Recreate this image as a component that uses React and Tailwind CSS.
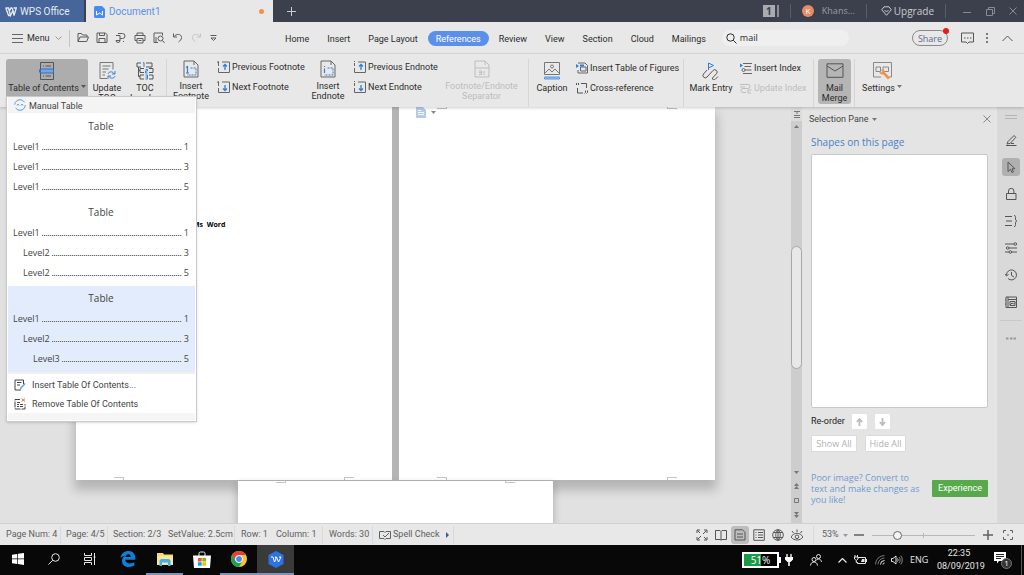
import { useState } from 'react';

const tabs = ['Home', 'Insert', 'Page Layout', 'References', 'Review', 'View', 'Section', 'Cloud', 'Mailings'];

const tocStyles = [
  [
    { label: 'Level1', page: 1, indent: 'pl-0' },
    { label: 'Level1', page: 3, indent: 'pl-0' },
    { label: 'Level1', page: 5, indent: 'pl-0' },
  ],
  [
    { label: 'Level1', page: 1, indent: 'pl-0' },
    { label: 'Level2', page: 3, indent: 'pl-[10px]' },
    { label: 'Level2', page: 5, indent: 'pl-[10px]' },
  ],
  [
    { label: 'Level1', page: 1, indent: 'pl-0' },
    { label: 'Level2', page: 3, indent: 'pl-[10px]' },
    { label: 'Level3', page: 5, indent: 'pl-[20px]' },
  ],
];

const UI_TEXT = "font-['Roboto','Noto_Sans',sans-serif] text-[9px]";
const WIDE_TEXT = "font-['Open_Sans','Noto_Sans',sans-serif] text-[9px]";

function Icon({ w = 12, h = w, children, className = '' }) {
  return (
    <svg
      width={w}
      height={h}
      viewBox={`0 0 ${w} ${h}`}
      fill="none"
      stroke="currentColor"
      strokeWidth="1"
      aria-hidden="true"
      className={`shrink-0 ${className}`}
    >
      {children}
    </svg>
  );
}

function Caret({ className = '' }) {
  return (
    <Icon w={5} h={3} className={className}>
      <path d="M0 0h5L2.500 3z" fill="currentColor" stroke="none" />
    </Icon>
  );
}

function WpsMark({ w = 12, h = 10 }) {
  return (
    <svg width={w} height={h} viewBox="0 0 12 10" fill="none" stroke="currentColor" strokeWidth="1.300" aria-hidden="true" className="shrink-0">
      <path d="M.5 1h3l2 7.500L8 3.500 6.800 1h-1L4.500 4M.8 1l2.800 7.500h2M8 3.500l1 5L11.300 1H8.500" />
    </svg>
  );
}

function TitleBar() {
  return (
    <header className="flex h-[22px] shrink-0 items-stretch bg-[#3c404c] text-[#c9cbd0]">
      <button type="button" className={`${UI_TEXT} flex w-[84px] items-center gap-[3px] bg-[#46659b] pl-[5px] pt-px text-[#e6ebf3]`}>
        <WpsMark />
        <span className="text-[10px]">WPS Office</span>
      </button>
      <div className={`${UI_TEXT} ml-[2px] flex w-[187px] items-center bg-[#e8e8e8] pl-2 pr-[9px] pt-px text-[#5b93e8]`}>
        <Icon w={11} h={12}>
          <path d="M1.500 0H8l3 3v7.500a1.500 1.500 0 0 1-1.500 1.500h-8A1.500 1.500 0 0 1 0 10.500v-9A1.500 1.500 0 0 1 1.500 0z" fill="#4b8af0" stroke="none" />
          <path d="M2.500 5v4L5.500 7l3 2V5" stroke="#fff" />
        </Icon>
        <span className="ml-1 flex-1 text-[10px]">Document1</span>
        <span className="size-[5px] rounded-full bg-[#f0924c]" />
      </div>
      <button type="button" aria-label="New tab" className="flex w-9 items-center justify-center">
        <Icon w={9}><path d="M4.500 0v9M0 4.500h9" /></Icon>
      </button>
      <div className="ml-auto flex items-center text-[10px]">
        <button type="button" aria-label="Windows" className="flex items-center gap-[2px]">
          <span className="flex h-3 w-[12px] items-center justify-center bg-[#a9abb1] font-bold text-[#3c404c]">1</span>
          <span className="h-3 w-[2px] bg-[#8b8e96]" />
        </button>
        <span className="ml-[11px] h-[14px] w-px bg-[#5a5e69]" />
        <button type="button" className="ml-[11px] flex items-center gap-2 text-[9px] font-medium text-[#9a9da5]">
          <span className="flex size-3 items-center justify-center rounded-full bg-[#e88a66] text-[8px] text-white">K</span>
          Khans...
        </button>
        <span className="ml-[11px] h-[14px] w-px bg-[#5a5e69]" />
        <button type="button" className="ml-[14px] flex items-center gap-[2px]">
          <Icon w={11} h={10}><path d="M3 .8h5l2.300 3-4.800 5.500L.7 3.800zM3.500 4l2 2 2-2" /></Icon>
          Upgrade
        </button>
        <span className="ml-[11px] h-[14px] w-px bg-[#5a5e69]" />
        <button type="button" aria-label="Minimize" className="ml-[17px] text-[#888b94]"><Icon w={8}><path d="M0 5.500h8" /></Icon></button>
        <button type="button" aria-label="Restore" className="ml-[15px] text-[#888b94]"><Icon w={9}><path d="M.5 2.500h6v6h-6zM2.500 2.500v-2h6v6h-2" /></Icon></button>
        <button type="button" aria-label="Close" className="ml-[14px] mr-[7px] text-[#888b94]"><Icon w={8}><path d="M.5.5l7 7M7.500.5l-7 7" /></Icon></button>
      </div>
    </header>
  );
}

const quickTools = [
  { name: 'Open', icon: <path d="M1 9.500v-8h3.500l1 1.500H10v2M1 9.500l2-4.500h8.500l-1.800 4.500z" /> },
  { name: 'Save', icon: <path d="M1 1h8.500L11 2.500V10.500H1zM3.500 1v2.500h5V1M3 10.500V6.500h6v4" /> },
  { name: 'Export to PDF', icon: <path d="M3 1.500h4.500a2.500 2.500 0 0 1 0 5H5M5 3.500v5a2 2 0 0 1-4 0h4M1 3.500h4M8 9.500h1" /> },
  { name: 'Print', icon: <path d="M3 3.500V1h6v2.500M3 8.500H1v-5h10v5H9M3 6.500h6v4.500H3zM4.500 8.500h3" /> },
  { name: 'Print Preview', icon: <path d="M5 10.500H1V1h8.500v2.500M7.500 4a2.500 2.500 0 1 1 0 5 2.500 2.500 0 0 1 0-5zM9.500 8.500l2 2.500M3 10.500V5" /> },
  { name: 'Undo', icon: <path d="M1.500 1.500v3.500H5M1.800 4.800C4 1.500 9.500 1.500 9.500 5.500c0 2-1.500 3.500-3 4.500" /> },
];

function MenuRow({ active, onSelect }) {
  return (
    <div className={`${UI_TEXT} flex h-8 shrink-0 items-center border-b border-[#dadada] bg-[#e8e8e8] pt-px text-[#2c2c2c]`}>
      <button type="button" className="ml-3 flex w-[50px] items-center gap-1">
        <Icon w={11} h={9} className="text-[#666]"><path d="M0 .5h11M0 4.500h11M0 8.500h11" /></Icon>
        <span className="pt-[2px]">Menu</span>
        <Icon w={7} h={4} className="ml-auto text-[#999]"><path d="M.5.5l3 3 3-3" /></Icon>
      </button>
      <span className="ml-[7px] h-[17px] w-px bg-[#c4c4c4]" />
      <div className="ml-[7px] flex w-[141px] items-center gap-[7px] text-[#5c5c5c]">
        {quickTools.map((tool) => (
          <button key={tool.name} type="button" aria-label={tool.name}><Icon>{tool.icon}</Icon></button>
        ))}
        <button type="button" aria-label="Redo" disabled className="text-[#c6c6c6]">
          <Icon><path d="M9.500 1.500v3.500H6M9.200 4.800C7 1.500 1.500 1.500 1.500 5.500c0 2 1.500 3.500 3 4.500" /></Icon>
        </button>
        <button type="button" aria-label="Customize toolbar"><Icon w={7} h={6}><path d="M.5.5h6M1 3l2.500 2.500L6 3z" /></Icon></button>
      </div>
      <nav className="ml-[59px] flex gap-[2px]">
        {tabs.map((tab) => (
          <button
            key={tab}
            type="button"
            onClick={() => onSelect(tab)}
            className={`h-[15px] rounded-full px-2 leading-[17px] whitespace-nowrap ${tab === active ? 'bg-[#5b8fe8] text-white' : ''}`}
          >
            {tab}
          </button>
        ))}
      </nav>
      <label className="ml-2 flex h-4 w-[127px] items-center gap-[3px] rounded-full bg-[#efefef] pl-1">
        <Icon w={11}><circle cx="4.500" cy="4.500" r="3.700" /><path d="M7.200 7.200l3.300 3.300" /></Icon>
        <input aria-label="Search" defaultValue="mail" className={`${WIDE_TEXT} w-full min-w-0 bg-transparent outline-none`} />
      </label>
      <div className="ml-auto flex items-center pr-[11px] text-[#555]">
        <button type="button" className={`${WIDE_TEXT} relative h-4 w-9 rounded-full border border-[#8a8a8a] leading-[13px] text-[#60688c]`}>
          Share
          <span className="absolute -right-[2px] -top-[3px] size-[6px] rounded-full bg-[#e21b1b]" />
        </button>
        <button type="button" aria-label="Comments" className="ml-[13px]">
          <Icon w={13}><path d="M.5 1h12v9H8L6.500 11.500 5 10H.5zM3 6h1.500M6 6h1.500M9 6h1.500" /></Icon>
        </button>
        <button type="button" aria-label="More" className="ml-[12px]">
          <Icon w={2} h={10}><path d="M0 1h2M0 5h2M0 9h2" strokeWidth="1.500" /></Icon>
        </button>
        <button type="button" aria-label="Collapse ribbon" className="ml-[14px]">
          <Icon w={11} h={7}><path d="M.5 6l5-5 5 5" /></Icon>
        </button>
      </div>
    </div>
  );
}

const RIBBON_BIG = 'flex shrink-0 flex-col items-center text-center leading-[10px] whitespace-nowrap';

function Divider() {
  return <span className="h-12 w-px shrink-0 bg-[#d6d6d6]" />;
}

function SmallTool({ icon, children, disabled }) {
  return (
    <button type="button" disabled={disabled} className={`flex h-4 items-center gap-[2px] whitespace-nowrap ${disabled ? 'text-[#bdbdbd]' : ''}`}>
      {icon}
      <span className="pt-[2px]">{children}</span>
    </button>
  );
}

function NoteArrow({ up, mark }) {
  return (
    <Icon w={13} h={12} className="text-[#666]">
      <path d={mark === '1' ? 'M0 1.500L1.500.5V5' : 'M1.500 0v1M1.500 2v3'} />
      <path d="M1.500 7v4.500h11V1H5" />
      <path d={up ? 'M8 9V4M6 5.500L8 3.500l2 2' : 'M8 4v5M6 7.500l2 2 2-2'} stroke="#2f7fd6" strokeWidth="1.300" />
    </Icon>
  );
}

function NoteIcon({ mark }) {
  return (
    <Icon w={16} h={18} className="text-[#666]">
      <path d="M1 1h10l4 4v12H1zM11 1v4" />
      <path d={mark === '1' ? 'M3 7.500l1.500-1V13M3 13h3' : 'M4.500 6v1M4.500 8.500V13'} stroke="#2f7fd6" strokeWidth="1.200" />
      <path d="M7.500 8H13v7H4" stroke="#2f7fd6" strokeDasharray="2 1" />
    </Icon>
  );
}

function TocMenu({ selected, onSelect }) {
  return (
    <div role="menu" className="absolute left-0 top-[37px] z-20 w-[191px] border border-[#c9c9c9] bg-white px-px text-left text-[#444] shadow-sm">
      <div className="mb-px flex h-4 items-center gap-[3px] bg-[#f4f4f4] pl-[6px] leading-none">
        <Icon w={12}>
          <circle cx="6" cy="6" r="5.300" stroke="#5b9be6" strokeDasharray="13 3.600" />
          <path d="M3 6.500L4 5l1 1.500M7 6.500L8 5l1 1.500" stroke="#5b9be6" />
        </Icon>
        <span className="pt-[2px]">Manual Table</span>
      </div>
      {tocStyles.map((rows, index) => (
        <button
          key={index}
          type="button"
          role="menuitem"
          onClick={() => onSelect(index)}
          className={`${WIDE_TEXT} flex w-full flex-col py-[3px] pl-[5px] pr-[6px] ${index === selected ? 'bg-[#e2ecfd]' : ''}`}
        >
          <span className="h-5 self-center pt-[3px] text-[10px] leading-3">Table</span>
          {rows.map((row, rowIndex) => (
            <span key={rowIndex} className={`flex h-5 w-full items-center ${row.indent}`}>
              <span>{row.label}</span>
              <span className="ml-[2px] mr-[2px] mt-[5px] h-px flex-1 bg-[repeating-linear-gradient(90deg,#6a6a6a_0_1px,#d0d0d0_1px_2px)]" />
              <span>{row.page}</span>
            </span>
          ))}
        </button>
      ))}
      <div className="border-t-2 border-[#f0f0f0] pt-px">
        <button type="button" role="menuitem" className="flex h-[19px] w-full items-center gap-[6px] pl-[6px]">
          <Icon w={12}>
            <path d="M7 11H1V1h8.500v4M3 3.500h4.500M3 6h3" />
            <path d="M11.500 5L7 10l-1.500 1 .5-2 4.500-5z" fill="#5b9be6" stroke="none" />
          </Icon>
          <span className="pt-[2px]">Insert Table Of Contents...</span>
        </button>
        <button type="button" role="menuitem" className="flex h-[19px] w-full items-center gap-[6px] pl-[6px]">
          <Icon w={12}>
            <path d="M6 1.500H1V11h10V6M3 4.500h3M3 6.500h2M6 6.500h3M3 8.500h2M6 8.500h3" strokeDasharray="6 1" />
            <path d="M7.500.5l3.500 3M11 .5l-3.500 3" stroke="#d9733c" />
          </Icon>
          <span className="pt-[2px]">Remove Table Of Contents</span>
        </button>
      </div>
      <div className="mb-px h-[7px] bg-[#f5f5f5]" />
    </div>
  );
}

function Ribbon() {
  const [selected, setSelected] = useState(2);

  return (
    <div className={`${UI_TEXT} z-10 flex h-[53px] shrink-0 items-start bg-[#e8e8e8] pl-[6px] pt-[5px] text-[#2c2c2c] shadow-[0_1px_3px_#0003]`}>
      <div className="relative">
        <button type="button" className={`${RIBBON_BIG} h-[38px] w-[82px] rounded-t-[3px] bg-[#adadad] pt-[3px]`}>
          <Icon w={16} h={18} className="text-[#555]">
            <path d="M1.500.5h13v17h-13zM4 4h1M6.500 4H12M4 14h1M6.500 14H12" />
            <path d="M1.500 7h13v4h-13z" fill="#74a7e0" stroke="#2f6fc0" />
            <path d="M0 7l2 2-2 2z" fill="#2f6fc0" stroke="none" />
          </Icon>
          <span className="mt-[3px] flex items-center gap-[2px]">Table of Contents <Caret className="mb-1 text-[#555]" /></span>
        </button>
        <TocMenu selected={selected} onSelect={setSelected} />
      </div>
      <button type="button" className={`${RIBBON_BIG} w-[38px] pt-[3px]`}>
        <Icon w={17} h={18} className="mb-[3px] text-[#777]">
          <path d="M8 16.500H1V.5h13v7M3.500 4h8M3.500 7h6M3.500 10H7M3.500 13H6" />
          <path d="M9 12c.5-2.500 4.500-3 6-.5M16 9v3h-3M16 14c-.5 2.500-4.500 3-6 .5M9 17v-3h3" stroke="#2f7fd6" />
        </Icon>
        Update<br />TOC
      </button>
      <button type="button" className={`${RIBBON_BIG} w-[38px] pt-[3px]`}>
        <Icon w={18} h={18} className="mb-[3px] text-[#555]">
          <path d="M5 1H1v4h4M10 1h6v4h-6M8 6.500H4v4h4M13 6.500h4v4h-4M8 13H4v4h4M13 13h4v4h-4M2.500 5v9.500H4M2.500 8.500H4" />
          <path d="M7 1l1-.5V5M9.500 7.500h2v1.500h-2v2h2M9.500 13h2v4h-2M9.500 15h2" stroke="#2f7fd6" />
        </Icon>
        TOC
        <span className="flex items-center gap-1">Level <Caret /></span>
      </button>
      <span className="w-[2px]" />
      <Divider />
      <button type="button" className={`${RIBBON_BIG} ml-[5px] w-[38px] pt-px`}>
        <NoteIcon mark="1" />
        <span className="mt-[3px]">Insert<br />Footnote</span>
      </button>
      <div className="ml-[7px] flex w-[92px] flex-col gap-1">
        <SmallTool icon={<NoteArrow up mark="1" />}>Previous Footnote</SmallTool>
        <SmallTool icon={<NoteArrow mark="1" />}>Next Footnote</SmallTool>
      </div>
      <button type="button" className={`${RIBBON_BIG} w-[38px] pt-px`}>
        <NoteIcon mark="i" />
        <span className="mt-[3px]">Insert<br />Endnote</span>
      </button>
      <div className="ml-[6px] flex w-[92px] flex-col gap-1">
        <SmallTool icon={<NoteArrow up mark="i" />}>Previous Endnote</SmallTool>
        <SmallTool icon={<NoteArrow mark="i" />}>Next Endnote</SmallTool>
      </div>
      <button type="button" disabled className={`${RIBBON_BIG} w-[73px] pt-px text-[#bdbdbd]`}>
        <Icon w={16} h={18}><path d="M1 1h10l4 4v12H1zM11 1v4M1 8h14M5 11h2.500v3.500H5M5 12.500h2M10 11v4" /></Icon>
        <span className="mt-[3px]">Footnote/Endnote<br />Separator</span>
      </button>
      <span className="w-[10px]" />
      <Divider />
      <button type="button" className={`${RIBBON_BIG} ml-1 w-[38px] pt-[3px]`}>
        <Icon w={16} h={18} className="mb-[3px] text-[#777]">
          <path d="M.5.5h15v12H.5zM1 11l4-4 3 3 3-3 4 4" />
          <circle cx="8" cy="4.500" r="1.500" />
          <path d="M.5 15h15v2H.5z" fill="#8fbdee" stroke="#5b9be6" />
        </Icon>
        Caption
      </button>
      <div className="ml-[5px] flex w-[102px] flex-col gap-1 pt-px">
        <SmallTool icon={(
          <Icon w={12} className="text-[#666]">
            <path d="M2 1h7l2.500 2.500V11H2V8M4.500 5H10v4H4.500z" />
            <path d="M0 2l3 2-3 2zM4 2.500h4v2H4z" fill="#2f7fd6" stroke="none" />
          </Icon>
        )}
        >
          Insert Table of Figures
        </SmallTool>
        <SmallTool icon={(
          <Icon w={12} className="text-[#555]">
            <path d="M5 1.500h5.500V6M1.500 6v5H7M.5 1v2M2.500 1v2M9.500 8.500v2l-1 1M11.500 8.500v2l-1 1" />
          </Icon>
        )}
        >
          Cross-reference
        </SmallTool>
      </div>
      <span className="w-[5px]" />
      <Divider />
      <button type="button" className={`${RIBBON_BIG} ml-[5px] w-11 pt-[3px]`}>
        <Icon w={18} h={18} className="mb-[3px] text-[#555]">
          <path d="M5 8l-3.500 4a2.300 2.300 0 0 0 3.500 3L11 8.500a2.300 2.300 0 0 1 3.500 3.200L10.500 16a1.500 1.500 0 0 0 2.500 1.500l3-3" />
          <path d="M6.500 8V1l5 2.500-5 2.500" stroke="#2f7fd6" />
        </Icon>
        Mark Entry
      </button>
      <div className="ml-[7px] flex w-[68px] flex-col gap-1 pt-px">
        <SmallTool icon={(
          <Icon w={12} className="text-[#666]">
            <path d="M3 1.500h9M4.500 4.500H11M2 8a1.500 1.500 0 1 0 3 0 1.500 1.500 0 0 0-3 0M5 8h6.500M3 11.500h9" />
            <path d="M0 1.500l3 2-3 2z" fill="#2f7fd6" stroke="none" />
          </Icon>
        )}
        >
          Insert Index
        </SmallTool>
        <SmallTool
          disabled
          icon={<Icon w={12}><path d="M0 2.500h8a2 2 0 0 1 0 4H3a2 2 0 0 0 0 4h3M0 5h5M8 8h3.500M8 8v3M11 11H8" /></Icon>}
        >
          Update Index
        </SmallTool>
      </div>
      <span className="w-[5px]" />
      <Divider />
      <button type="button" className={`${RIBBON_BIG} ml-1 h-[45px] w-[33px] rounded-[3px] bg-[#b5b5b5] pt-[3px]`}>
        <Icon w={18} h={18} className="mb-[3px] text-[#555]"><path d="M1 1.800h16v13.500H1zM1 4l8 5 8-5" /></Icon>
        Mail<br />Merge
      </button>
      <span className="w-[3px]" />
      <Divider />
      <button type="button" className={`${RIBBON_BIG} ml-2 w-[38px] pt-[3px]`}>
        <Icon w={19} h={18} className="mb-[3px] text-[#888]">
          <path d="M.5 15V.5h18V15H16M.5 15H8M3 5h4.500v4.500H3zM10 5h5.500v4.500H10z" />
          <path d="M8 8c2-1 4 0 4 2.500l5 5-2 2-4.500-5C8 13 6 11.500 6.500 9.500l2 1 1-1z" fill="#f0924c" stroke="none" />
        </Icon>
        <span className="flex items-center gap-[2px]">Settings <Caret className="mb-1 text-[#777]" /></span>
      </button>
    </div>
  );
}

function CropMarks({ top, bottom }) {
  return (
    <>
      {top && (
        <>
          <span className="absolute left-[38px] top-0 h-[2px] w-[10px] border-b border-r border-[#c4c4c4]" />
          <span className="absolute right-[38px] top-0 h-[2px] w-[10px] border-b border-l border-[#c4c4c4]" />
        </>
      )}
      {bottom && (
        <>
          <span className="absolute bottom-0 left-[38px] h-[3px] w-[10px] border-r border-t border-[#c4c4c4]" />
          <span className="absolute bottom-0 right-[38px] h-[3px] w-[10px] border-l border-t border-[#c4c4c4]" />
        </>
      )}
    </>
  );
}

function Canvas() {
  return (
    <main className="flex min-w-0 flex-1 flex-col items-center overflow-hidden bg-[#e1e1e1]">
      <div className="flex h-[373px] shrink-0 gap-[7px] bg-[#b5b5b5] shadow-[0_8px_10px_2px_#0003]">
        <article className="relative w-[316px] bg-white">
          <p className="pl-[117px] pt-[113px] text-[7px] font-bold leading-[10px] text-black">Ms&nbsp; Word</p>
          <CropMarks bottom />
        </article>
        <article className="relative w-[316px] bg-white">
          <button type="button" aria-label="Paste options" className="ml-[17px] flex items-center gap-[5px] text-[#888]">
            <Icon w={10} h={11}>
              <path d="M0 0h7l3 3v8H0z" fill="#b4cbee" stroke="none" />
              <path d="M2 3.500h3M2 5.500h6M2 7.500h6" stroke="#fff" />
            </Icon>
            <Caret />
          </button>
          <CropMarks top bottom />
        </article>
      </div>
      <article className="relative mt-px w-[315px] flex-1 bg-white shadow-[0_4px_8px_1px_#0003]">
        <CropMarks top />
      </article>
    </main>
  );
}

function ScrollBar() {
  return (
    <div className="flex w-[11px] shrink-0 flex-col items-center bg-[#cdcdcd] text-[#777]">
      <button type="button" aria-label="Split" className="flex h-[14px] w-full items-center justify-center bg-[#dcdcdc]">
        <Icon w={6} h={7}><path d="M0 .5h6M3 1v2M0 4.500h6M0 6.500h6" /></Icon>
      </button>
      <button type="button" aria-label="Scroll up" className="mt-1"><Icon w={5} h={3} className="rotate-180"><path d="M0 0h5L2.500 3z" fill="currentColor" stroke="none" /></Icon></button>
      <div className="flex w-full flex-1 flex-col">
        <span className="flex-[117]" />
        <span className="w-full flex-[119] rounded-full border border-[#a8a8a8] bg-[#e8e8e8]" />
        <span className="flex-[101]" />
      </div>
      <div className="flex flex-col items-center gap-[9px] pb-[5px]">
        <button type="button" aria-label="Scroll down" className="flex"><Caret /></button>
        <button type="button" aria-label="Previous page" className="flex"><Icon w={5} h={6}><path d="M0 3l2.500-3L5 3zM0 6l2.500-3L5 6z" fill="currentColor" stroke="none" /></Icon></button>
        <button type="button" aria-label="Browse object" className="flex"><Icon w={5}><path d="M.5.5h4v4h-4z" /></Icon></button>
        <button type="button" aria-label="Next page" className="flex"><Icon w={5} h={6}><path d="M0 0l2.500 3L5 0zM0 3l2.500 3L5 3z" fill="currentColor" stroke="none" /></Icon></button>
      </div>
    </div>
  );
}

function SelectionPane() {
  return (
    <aside className="flex w-[195px] shrink-0 flex-col bg-[#e4e4e4] pb-[18px] pl-[9px] pr-[9px] text-[9px] text-[#444]">
      <div className="-ml-[2px] -mr-[3px] flex h-6 items-center justify-between">
        <button type="button" className={`${UI_TEXT} flex items-center gap-[3px]`}>
          <span className="pt-[2px]">Selection Pane</span>
          <Caret className="text-[#777]" />
        </button>
        <button type="button" aria-label="Close pane"><Icon w={8} className="text-[#888]"><path d="M.5.5l7 7M7.500.5l-7 7" /></Icon></button>
      </div>
      <h2 className="mt-[3px] text-[10px] leading-4 text-[#4a7fc4]">Shapes on this page</h2>
      <div className="mt-1 flex-1 rounded-[2px] border border-[#c8c8c8] bg-white" />
      <div className="mt-[6px] flex items-center">
        <span className={`${UI_TEXT} w-[41px] text-[#222]`}>Re-order</span>
        <button type="button" aria-label="Move up" disabled className="flex size-[15px] items-center justify-center rounded-[1px] bg-white text-[#bbb]">
          <Icon w={7} h={8}><path d="M3.500 8V2M.8 4l2.700-3 2.700 3" strokeWidth="1.800" /></Icon>
        </button>
        <button type="button" aria-label="Move down" disabled className="ml-2 flex size-[15px] items-center justify-center rounded-[1px] bg-white text-[#bbb]">
          <Icon w={7} h={8}><path d="M3.500 0v6M.8 4l2.700 3 2.700-3" strokeWidth="1.800" /></Icon>
        </button>
      </div>
      <div className="mt-[6px] flex gap-2 text-[#b0b0b0]">
        <button type="button" disabled className="h-[17px] w-[46px] rounded-[1px] border border-[#dadada] bg-white leading-[15px]">Show All</button>
        <button type="button" disabled className="h-[17px] w-[41px] rounded-[1px] border border-[#dadada] bg-white leading-[15px]">Hide All</button>
      </div>
      <div className="mt-5 flex items-center justify-between">
        <p className="leading-[11px] whitespace-nowrap text-[#6f9bd1]">Poor image? Convert to<br />text and make changes as<br />you like!</p>
        <button type="button" className={`${UI_TEXT} h-[17px] w-14 shrink-0 rounded-[1px] bg-[#58a94c] text-white`}>Experience</button>
      </div>
    </aside>
  );
}

const railTools = [
  { name: 'Edit', icon: <path d="M3 7.500l6-6 1.800 1.800-5.500 6-3.300.7zM1 11.500h10.500M6 9.500h3" /> },
  { name: 'Select', icon: <path d="M3 1v9.500l2.500-2.200L7 11.500l1.500-.7-1.500-3H10z" />, active: true },
  { name: 'Protect', icon: <path d="M1.500 5.500h9.500v6H1.500zM3.500 5.500V3a2.700 2.700 0 0 1 5.400 0v2.500" /> },
  { name: 'Styles', icon: <path d="M0 1.500h7M1 6h6M0 10.500h7M9 .5c2 0 1.500 1.500 1.500 3.500 0 1 .5 2 1.500 2-1 0-1.500 1-1.500 2 0 2 .5 3.500-1.500 3.500" /> },
  { name: 'Properties', icon: <path d="M0 2h9M9 2a1.300 1.300 0 1 0 2.600 0A1.300 1.300 0 0 0 9 2M4 6h8M1.400 6A1.300 1.300 0 1 0 4 6a1.300 1.300 0 0 0-2.600 0M0 10h4M4 10a1.300 1.300 0 1 0 2.600 0A1.300 1.300 0 0 0 4 10M6.600 10H12" /> },
  { name: 'History', icon: <path d="M1.500 6a5 5 0 1 1 1.500 3.500M0 5l1.500 2L3.500 5.500M6.500 3v3.500L9 8" /> },
  { name: 'Gallery', icon: <path d="M1 1h10.500v10.500H1zM3 1v10.500M3 3.500h8.500M0 4h1M0 8h1M5 5.500h5v4H5zM5 9l2-2 1.500 1L10 6.500" /> },
];

function SideRail() {
  return (
    <div className="flex w-[27px] shrink-0 flex-col items-center bg-[#d9d9d9] text-[#555]">
      <Icon w={12} h={4} className="mb-[9px] mt-2 text-[#b5b5b5]"><path d="M0 .5h12M0 3.500h12" /></Icon>
      <div className="flex flex-col gap-[9px] pt-[3px]">
        {railTools.map((tool) => (
          <button
            key={tool.name}
            type="button"
            aria-label={tool.name}
            className={`flex h-[18px] w-[18px] items-center justify-center rounded-[3px] ${tool.active ? 'bg-[#b0b0b0]' : ''}`}
          >
            <Icon>{tool.icon}</Icon>
          </button>
        ))}
      </div>
      <span className="mt-[9px] h-px w-[22px] bg-[#c8c8c8]" />
      <button type="button" aria-label="More tools" className="mt-[16px] text-[#999]">
        <Icon w={10} h={3}><path d="M0 1.500h2.500M4 1.500h2.500M7.500 1.500H10" strokeWidth="2" /></Icon>
      </button>
    </div>
  );
}

function StatusDivider() {
  return <span className="h-[18px] w-px bg-[#dadada]" />;
}

const viewTools = [
  { name: 'Full Screen', icon: <path d="M1 4V1h3M8 1h3v3M11 8v3H8M4 11H1V8M1.500 1.500L4 4M7 5l3.500-3.500M1.500 10.500L5 7M8 8l2.500 2.500" /> },
  { name: 'Reading View', icon: <path d="M.5 1.500H5l1 1 1-1h4.500v9H7l-1 .7-1-.7H.5zM6 2.500v8.500" /> },
  { name: 'Page View', icon: <path d="M1 .8h7.500L11 3.300V11H1zM3 5h6M3 8h6" />, active: true },
  { name: 'Outline', icon: <path d="M.8.8h10.500v10.500H.8zM2.500 3.500h1M5 3.500h5M2.500 6h1M5 6h5M2.500 8.500h1M5 8.500h5" /> },
  { name: 'Web Layout', icon: <path d="M6 .7a5.300 5.300 0 1 0 0 10.600A5.300 5.300 0 0 0 6 .7zM6 .7c-3 3-3 7.500 0 10.600M6 .7c3 3 3 7.500 0 10.600M1.500 3.500h9M1.500 8.500h9M6 .7v10.600" /> },
  { name: 'Eye Protection', icon: <path d="M0 8c3-5 9-5 12 0-3 4-9 4-12 0zM4.200 7.800a1.800 1.800 0 1 0 3.600 0 1.800 1.800 0 0 0-3.600 0M6 3V.5M2.500 4L1 2M9.500 4L11 2" /> },
];

function StatusBar() {
  return (
    <footer className={`${UI_TEXT} flex h-[22px] shrink-0 items-center border-t border-[#d0d0d0] bg-[#e8e8e8] pt-px whitespace-nowrap text-[#606060]`}>
      <span className="ml-[6px] w-[54px]">Page Num: 4</span>
      <StatusDivider />
      <span className="ml-[5px] w-[41px]">Page: 4/5</span>
      <StatusDivider />
      <span className="ml-[5px] w-[55px]">Section: 2/3</span>
      <span className="w-[66px]">SetValue: 2.5cm</span>
      <StatusDivider />
      <span className="ml-[6px] w-[35px]">Row: 1</span>
      <span className="w-[46px]">Column: 1</span>
      <StatusDivider />
      <span className="ml-[6px] w-[43px]">Words: 30</span>
      <StatusDivider />
      <button type="button" className="ml-[6px] flex items-center">
        <Icon w={12} h={10}><path d="M5 8.500H.5v-7H5l1 1 1-1h4.500v7H7l-1 1-1-1M4 5l2 2 4-4" /></Icon>
        <span className="ml-[2px] w-[53px] text-left">Spell Check</span>
        <Icon w={3} h={6}><path d="M0 0l3 3-3 3z" fill="#3d5a94" stroke="none" /></Icon>
      </button>
      <span className="w-1" />
      <StatusDivider />
      <div className="ml-auto flex items-center gap-px">
        {viewTools.map((tool) => (
          <button
            key={tool.name}
            type="button"
            aria-label={tool.name}
            className={`flex size-[18px] items-center justify-center rounded-[3px] text-[#555] ${tool.active ? 'bg-[#bdbdbd]' : ''}`}
          >
            <Icon>{tool.icon}</Icon>
          </button>
        ))}
      </div>
      <span className="w-[7px]" />
      <StatusDivider />
      <button type="button" className="ml-2 flex w-[32px] items-center gap-1">53% <Caret className="text-[#999]" /></button>
      <button type="button" aria-label="Zoom out"><Icon w={10}><path d="M0 5h10" strokeWidth="1.500" /></Icon></button>
      <input
        type="range"
        aria-label="Zoom"
        min="0"
        max="100"
        defaultValue="22"
        className="mx-2 h-[9px] w-[103px] appearance-none bg-[linear-gradient(#b8b8b8,#b8b8b8),linear-gradient(#b8b8b8,#b8b8b8)] bg-[length:100%_1px,1px_5px] bg-center bg-no-repeat [&::-webkit-slider-thumb]:size-[9px] [&::-webkit-slider-thumb]:appearance-none [&::-webkit-slider-thumb]:rounded-full [&::-webkit-slider-thumb]:border [&::-webkit-slider-thumb]:border-[#666] [&::-webkit-slider-thumb]:bg-[#f4f4f4]"
      />
      <button type="button" aria-label="Zoom in"><Icon w={10}><path d="M0 5h10M5 0v10" strokeWidth="1.500" /></Icon></button>
      <button type="button" aria-label="Fit page" className="ml-[10px] mr-[11px]">
        <Icon w={10}><path d="M.5 3V.5H3M7 .5h2.500V3M9.500 7v2.500H7M3 9.500H.5V7M4 5h2" /></Icon>
      </button>
    </footer>
  );
}

function TaskButton({ name, wide, running, active, children }) {
  return (
    <button
      type="button"
      aria-label={name}
      className={`flex h-full items-center justify-center border-b-2 ${wide ? 'w-[37px]' : 'w-9'} ${running ? 'border-[#7f93b8]' : 'border-transparent'} ${active ? 'bg-[#3a3a3a]' : ''}`}
    >
      {children}
    </button>
  );
}

function TaskBar() {
  return (
    <footer className="flex h-[30px] shrink-0 items-center bg-[#080808] text-[9px] text-[#e6e6e6]">
      <TaskButton name="Start">
        <Icon w={12}><path d="M0 1.700l5.300-.8v4.700H0zM6 .8L12 0v5.600H6zM0 6.300h5.300V11L0 10.300zM6 6.300h6V12l-6-.9z" fill="#fff" stroke="none" /></Icon>
      </TaskButton>
      <TaskButton name="Search"><Icon w={12}><circle cx="7.500" cy="4.500" r="3.800" /><path d="M4.700 7.300L.5 11.500" /></Icon></TaskButton>
      <TaskButton name="Task View"><Icon w={12}><path d="M.5 0v2.500h7V0M.5 12V9.500h7V12M.5 4.500h7v3h-7zM10.500 0v12M9.500 4h2" /></Icon></TaskButton>
      <span className="w-px" />
      <TaskButton name="Edge" wide>
        <Icon w={16}>
          <path d="M.5 7C1 2.500 4.500 0 8.500 0 13 0 15.500 3.500 15.300 7v1.800H5.300c.2 2.500 2 3.700 4.500 3.700 1.700 0 3.300-.5 4.500-1.200v3.300C13 15.500 11 16 8.800 16 4.500 16 2 13.500 2 10c0-2.500 1.200-4.200 3-5.200C3 5 1.500 6 .5 7zM5.500 6h5.200c0-1.700-.8-2.700-2.400-2.700C6.800 3.300 5.800 4.500 5.500 6z" fill="#0f7fdc" stroke="none" />
        </Icon>
      </TaskButton>
      <TaskButton name="File Explorer" wide running>
        <Icon w={16} h={14}>
          <path d="M0 1h6l1 1.500h9V13H0z" fill="#f7d774" stroke="none" />
          <path d="M0 4h16v9H0z" fill="#fbe59b" stroke="none" />
          <path d="M2.500 14V8.500L4 7h8l1.500 1.500V14H11v-3.500H5V14z" fill="#43b0e8" stroke="none" />
        </Icon>
      </TaskButton>
      <TaskButton name="Store" wide>
        <Icon w={18} h={17}>
          <path d="M6 5V2.500A1.500 1.500 0 0 1 7.500 1h3A1.500 1.500 0 0 1 12 2.500V5" stroke="#eee" />
          <path d="M0 4.500h18L17 17H1z" fill="#fff" stroke="none" />
          <path d="M5 7h3.700v3.500H5z" fill="#f25022" stroke="none" />
          <path d="M9.300 7H13v3.500H9.300z" fill="#7fba00" stroke="none" />
          <path d="M5 11.200h3.700v3.500H5z" fill="#00a4ef" stroke="none" />
          <path d="M9.300 11.200H13v3.500H9.300z" fill="#ffb900" stroke="none" />
        </Icon>
      </TaskButton>
      <TaskButton name="Chrome" wide running>
        <Icon w={16}>
          <circle cx="8" cy="8" r="8" fill="#f6c62f" stroke="none" />
          <path d="M1.070 4A8 8 0 0 1 14.930 4H8a4 4 0 0 0-3.500 6z" fill="#db4437" stroke="none" />
          <path d="M1.070 4L4.540 10A4 4 0 0 0 11.460 10L8 16A8 8 0 0 1 1.070 4z" fill="#1f9d57" stroke="none" />
          <circle cx="8" cy="8" r="3.500" fill="#4a86e8" stroke="#fff" />
        </Icon>
      </TaskButton>
      <TaskButton name="WPS Office" wide running active>
        <Icon w={16} h={17}>
          <path d="M8 0l7.500 4v9L8 17 .5 13V4z" fill="#2c74e0" stroke="none" />
          <path d="M3 6h2l1.500 5L8 8 7.300 6h1.200l2 5L13 6h-2" stroke="#fff" />
        </Icon>
      </TaskButton>

      <div className="ml-auto flex items-center">
        <div className="flex h-4 w-[37px] items-center justify-center border-2 border-white bg-[linear-gradient(90deg,#1a9a47_51%,#000_51%)] text-[10px] leading-none text-white">51%</div>
        <span className="h-[6px] w-[2px] bg-white" />
        <Icon w={8} h={12} className="ml-[4px]"><path d="M2 0v3M6 0v3" strokeWidth="1.500" /><path d="M0 3h8v2.500L5.500 8H4.800v4H3.200V8H2.500L0 5.500z" fill="#fff" stroke="none" /></Icon>
        <Icon w={12} className="ml-[17px]"><circle cx="4" cy="5.500" r="2" /><circle cx="8.500" cy="2.500" r="2" /><path d="M.5 11.500C1 8.500 2.500 8 4 8s3 .5 3.500 3.500M6.500 6c3-2 4.500-.5 5 2" /></Icon>
        <Icon w={9} h={5} className="ml-4"><path d="M.5 4.500l4-4 4 4" strokeWidth="1.200" /></Icon>
        <Icon w={13} h={10} className="ml-[7px]"><path d="M4 2.500h7.500v6H3.500V7M12.500 4v3M1 0v2M3.500 0v2M.5 2h3.500v2L2.300 5.500.5 4zM2.300 5.500V8" /><path d="M8 4h2.500v3H7z" fill="currentColor" stroke="none" /></Icon>
        <Icon w={10} className="ml-2"><path d="M.5 9.500a9 9 0 0 1 9-9M3 9.500A6.500 6.500 0 0 1 9.500 3" stroke="#777" /><path d="M5.500 9.500a4 4 0 0 1 4-4M8 9.500A1.500 1.500 0 0 1 9.500 8" /></Icon>
        <Icon w={12} h={10} className="ml-[6px]"><path d="M.5 3.500H2L5 1v8L2 6.500H.5zM6.500 3.500c.8 1 .8 2 0 3" /><path d="M8 2c1.500 2 1.500 4 0 6M9.800.5c2 3 2 6 0 9" stroke="#888" /></Icon>
        <span className="ml-[7px] w-[27px]">ENG</span>
        <div className={`${UI_TEXT} w-11 text-center leading-[13px] whitespace-nowrap`}>22:35<br />08/09/2019</div>
        <button type="button" aria-label="Notifications" className="relative ml-[13px]">
          <Icon w={18} h={17}>
            <path d="M0 0h12v9H5l-2 2.500V9H0z" fill="#fff" stroke="none" />
            <path d="M2 2.500h8M2 4.500h8M2 6.500h5" stroke="#222" />
          </Icon>
          <span className="absolute bottom-0 right-0 flex size-[11px] items-center justify-center rounded-full border border-[#777] bg-[#333] text-[8px] leading-none text-white">1</span>
        </button>
        <span className="ml-[9px] mr-[2px] h-[30px] w-px bg-[#555]" />
      </div>
    </footer>
  );
}

export default function App() {
  const [active, setActive] = useState('References');

  return (
    <div className="flex h-screen flex-col overflow-hidden bg-[#e8e8e8] font-['Open_Sans','Noto_Sans',sans-serif]">
      <TitleBar />
      <MenuRow active={active} onSelect={setActive} />
      <Ribbon />
      <div className="flex min-h-0 flex-1">
        <Canvas />
        <ScrollBar />
        <SelectionPane />
        <SideRail />
      </div>
      <StatusBar />
      <TaskBar />
    </div>
  );
}
